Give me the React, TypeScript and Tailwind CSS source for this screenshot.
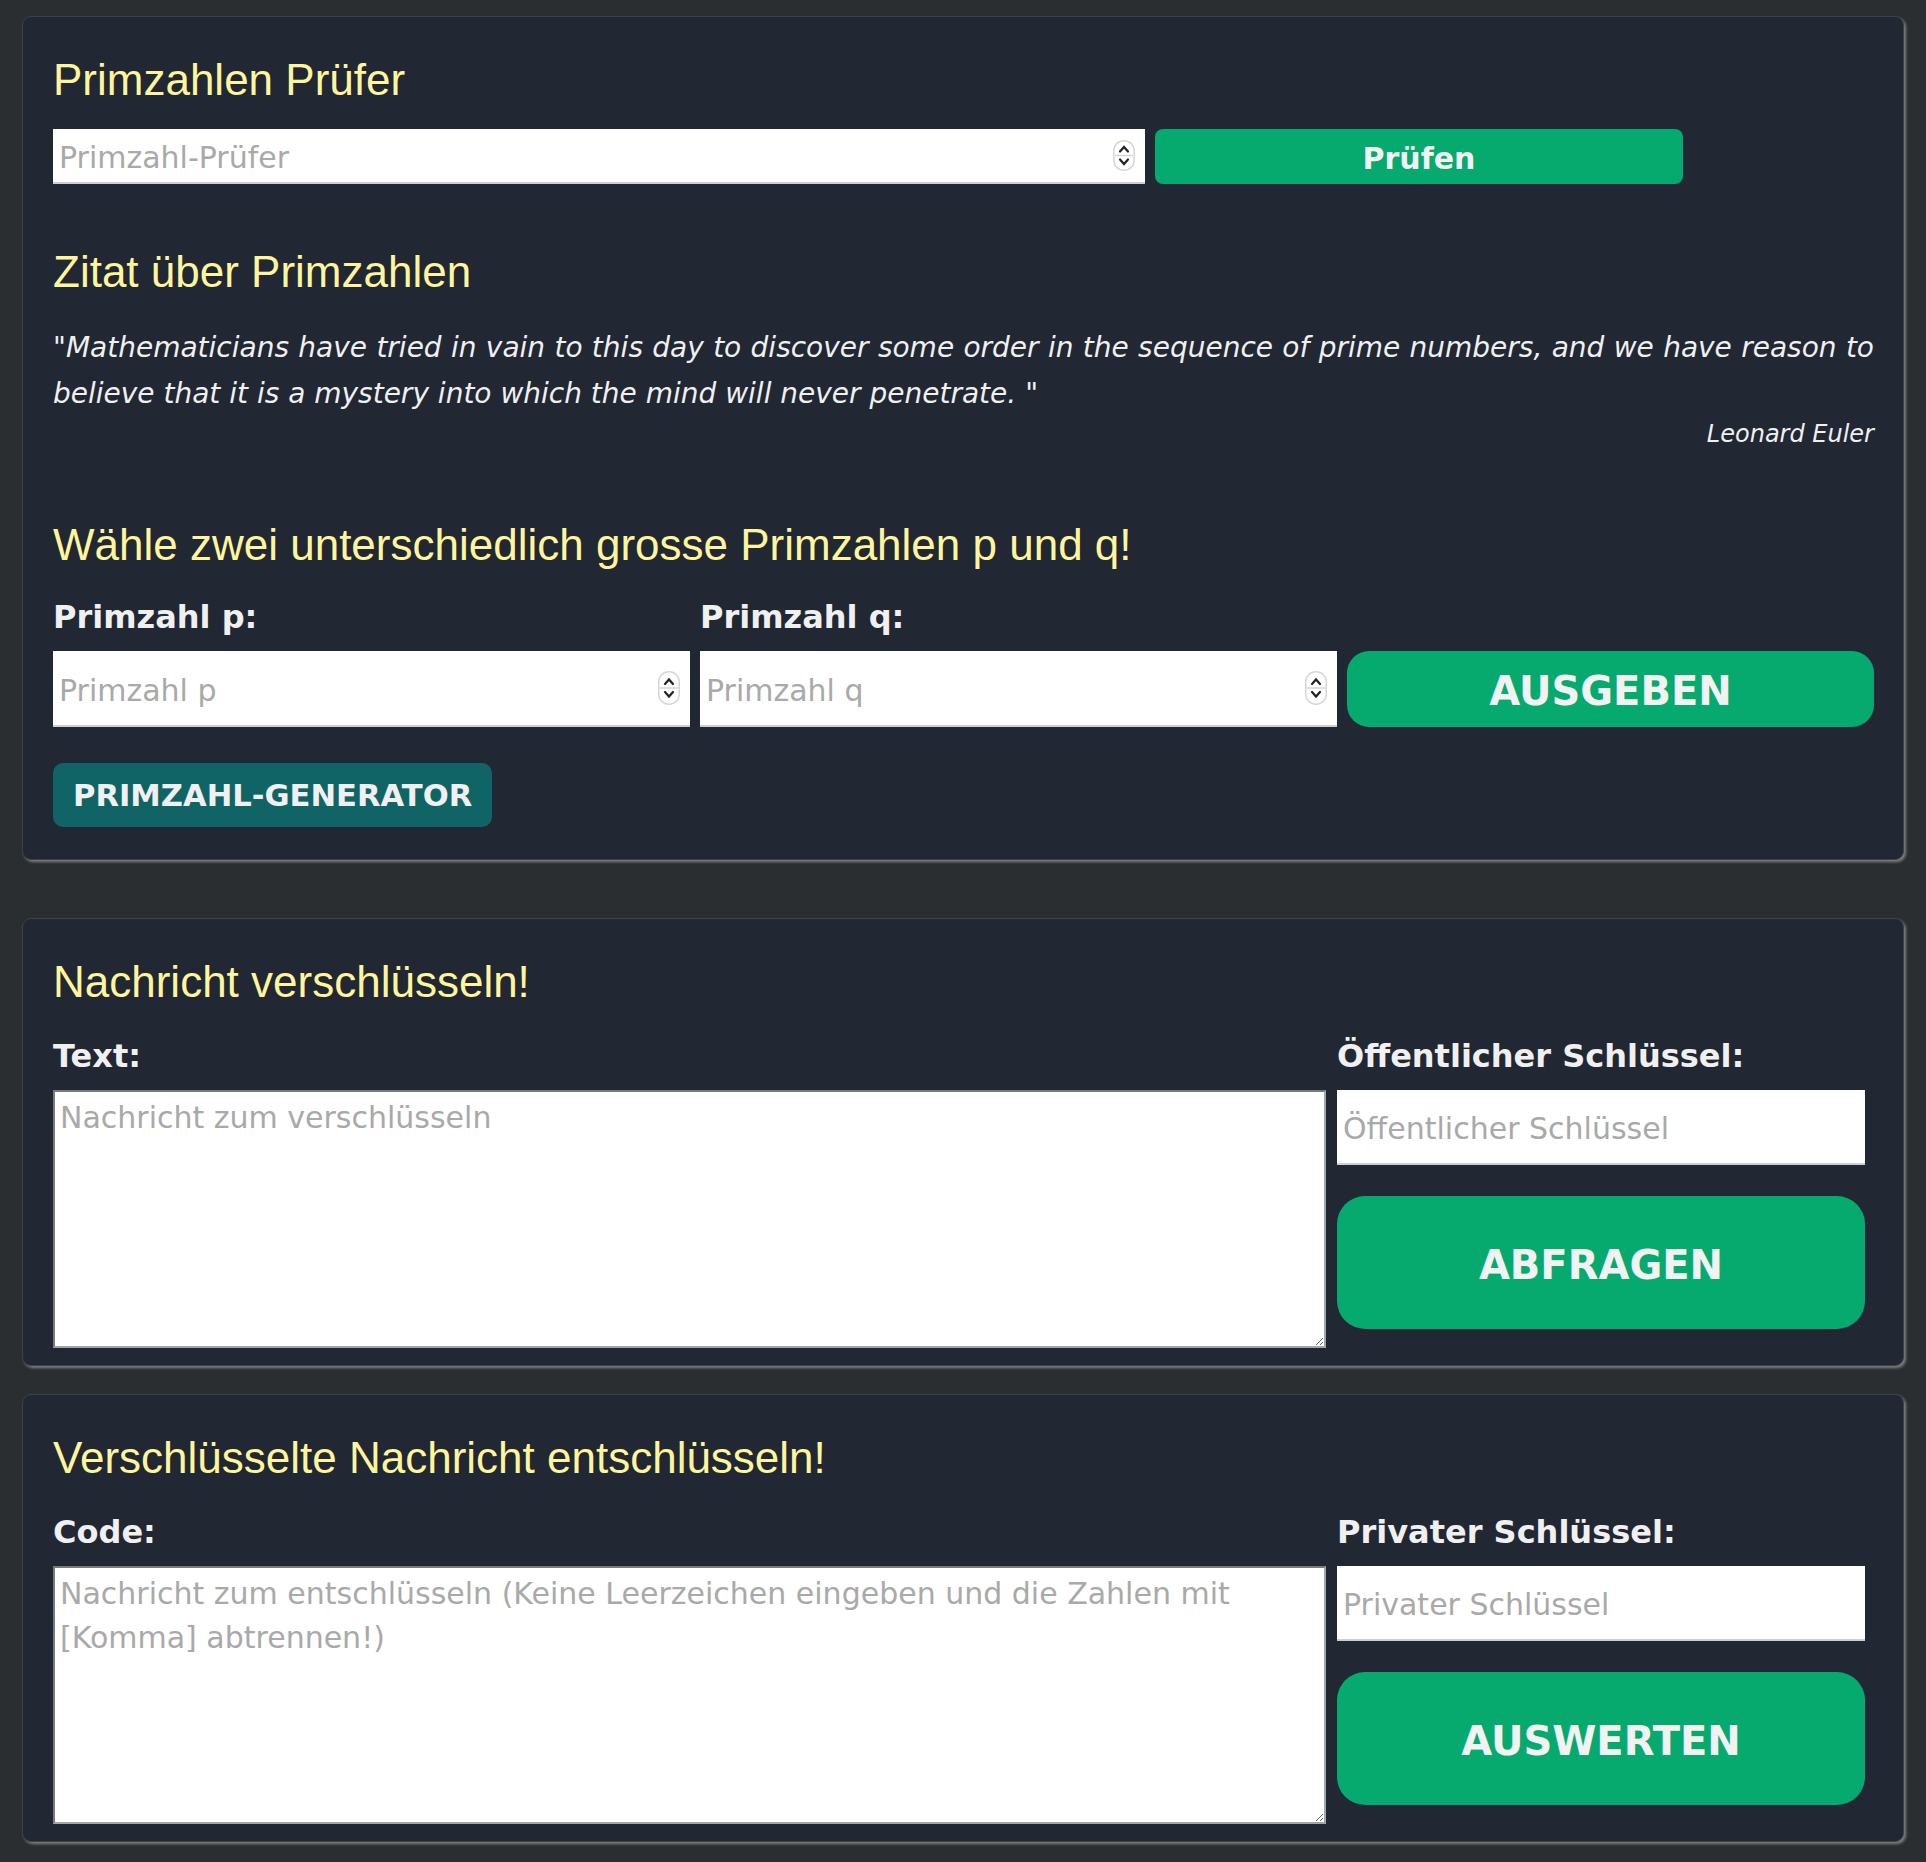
import { ReactNode } from "react";

const headingFont = "font-['Liberation_Sans',Arial,sans-serif]";
const bodyFont = "font-['DejaVu_Sans',Verdana,sans-serif]";

function Card({ children, className = "" }: { children: ReactNode; className?: string }) {
  return (
    <section
      className={`mx-[22px] rounded-[9px] border border-[#3d424a] bg-[#212733] pl-[30px] pr-[29px] pt-[38px] shadow-[2px_2px_3px_#7f7f7f] ${className}`}
    >
      {children}
    </section>
  );
}

function Heading({ children, className = "" }: { children: ReactNode; className?: string }) {
  return (
    <h2 className={`${headingFont} text-[44px] leading-[50px] font-normal text-[#fff59d] ${className}`}>
      {children}
    </h2>
  );
}

function Label({ children }: { children: ReactNode }) {
  return <label className="block text-[32px] leading-[36px] font-bold text-[#f0f0f0]">{children}</label>;
}

function Spinner({ small = false }: { small?: boolean }) {
  const h = small ? 31 : 34;
  return (
    <svg width="22" height={h} viewBox={`0 0 22 ${h}`} className="shrink-0">
      <rect x="0.75" y="0.75" width="20.5" height={h - 1.5} rx="10" fill="#fff" stroke="#d6d6d6" strokeWidth="1.5" />
      <line x1="2" y1={h / 2} x2="20" y2={h / 2} stroke="#d4d4d4" strokeWidth="1.5" />
      <path d={`M7 ${h / 2 - 4} L11 ${h / 2 - 8.5} L15 ${h / 2 - 4}`} fill="none" stroke="#222" strokeWidth="2.2" strokeLinecap="round" />
      <path d={`M7 ${h / 2 + 4} L11 ${h / 2 + 8.5} L15 ${h / 2 + 4}`} fill="none" stroke="#222" strokeWidth="2.2" strokeLinecap="round" />
    </svg>
  );
}

function NumberField({ placeholder, className = "", small = false }: { placeholder: string; className?: string; small?: boolean }) {
  return (
    <div className={`flex items-center bg-white border-b-2 border-[#cfcfcf] pr-[10px] ${className}`}>
      <input
        type="text"
        placeholder={placeholder}
        className="min-w-0 flex-1 bg-transparent pl-[6px] pt-[4px] text-[30px] text-[#222] outline-none placeholder:text-[#a9a9a9]"
      />
      <Spinner small={small} />
    </div>
  );
}

function TextField({ placeholder }: { placeholder: string }) {
  return (
    <input
      type="text"
      placeholder={placeholder}
      className="block h-[75px] w-full bg-white border-b-2 border-[#cfcfcf] pl-[6px] pt-[4px] text-[30px] text-[#222] outline-none placeholder:text-[#a9a9a9]"
    />
  );
}

function CipherCard({
  title,
  label,
  area,
  keyLabel,
  keyPlaceholder,
  action,
  className = "",
}: {
  title: string;
  label: string;
  area: string;
  keyLabel: string;
  keyPlaceholder: string;
  action: string;
  className?: string;
}) {
  return (
    <Card className={`pb-[17px] ${className}`}>
      <Heading>{title}</Heading>
      <div className="mt-[31px] grid grid-cols-[1273px_528px] gap-x-[11px] gap-y-[16px]">
        <Label>{label}</Label>
        <Label>{keyLabel}</Label>
        <textarea
          placeholder={area}
          className="block h-[258px] w-full border-2 border-[#7a7a7a] border-b-[#a5a5a5] border-r-[#a5a5a5] bg-white px-[5px] pt-[4px] text-[30px] leading-[44px] text-[#222] outline-none placeholder:text-[#a9a9a9]"
        />
        <div>
          <TextField placeholder={keyPlaceholder} />
          <button className="mt-[31px] h-[133px] w-full rounded-[28px] bg-[#06a96e] pt-[4px] text-[40px] font-bold text-[#f2f2f2]">
            {action}
          </button>
        </div>
      </div>
    </Card>
  );
}

export default function App() {
  return (
    <div className={`${bodyFont} min-h-screen bg-[#2a2e31] pt-[16px] pb-[21px]`}>
      <Card className="pb-[32px]">
        <Heading>Primzahlen Prüfer</Heading>
        <div className="mt-[24px] flex gap-[10px]">
          <NumberField placeholder="Primzahl-Prüfer" className="h-[55px] w-[1092px]" small />
          <button className="h-[55px] w-[528px] rounded-[8px] bg-[#06a96e] pt-[3px] text-[30px] font-bold text-[#f2f2f2]">
            Prüfen
          </button>
        </div>

        <Heading className="mt-[63px]">Zitat über Primzahlen</Heading>
        <p className="mt-[28px] text-justify text-[28px] leading-[46px] italic text-[#f0f0f0]">
          "Mathematicians have tried in vain to this day to discover some order in the sequence of prime numbers, and we
          have reason to believe that it is a mystery into which the mind will never penetrate. "
        </p>
        <p className="mt-[2px] text-right text-[24px] leading-[30px] italic text-[#f0f0f0]">Leonard Euler</p>

        <Heading className="mt-[71px]">Wähle zwei unterschiedlich grosse Primzahlen p und q!</Heading>
        <div className="mt-[29px] grid grid-cols-[637px_637px_1fr] gap-x-[10px] gap-y-[16px]">
          <Label>Primzahl p:</Label>
          <Label>Primzahl q:</Label>
          <div />
          <NumberField placeholder="Primzahl p" className="h-[76px]" />
          <NumberField placeholder="Primzahl q" className="h-[76px]" />
          <button className="h-[76px] rounded-[22px] bg-[#06a96e] pt-[4px] text-[40px] font-bold text-[#f2f2f2]">AUSGEBEN</button>
        </div>
        <button className="mt-[36px] h-[64px] rounded-[10px] bg-[#116466] px-[20px] pt-[2px] text-[30.6px] font-bold text-[#f0f0f0]">
          PRIMZAHL-GENERATOR
        </button>
      </Card>

      <CipherCard
        className="mt-[58px]"
        title="Nachricht verschlüsseln!"
        label="Text:"
        area="Nachricht zum verschlüsseln"
        keyLabel="Öffentlicher Schlüssel:"
        keyPlaceholder="Öffentlicher Schlüssel"
        action="ABFRAGEN"
      />

      <CipherCard
        className="mt-[28px]"
        title="Verschlüsselte Nachricht entschlüsseln!"
        label="Code:"
        area="Nachricht zum entschlüsseln (Keine Leerzeichen eingeben und die Zahlen mit [Komma] abtrennen!)"
        keyLabel="Privater Schlüssel:"
        keyPlaceholder="Privater Schlüssel"
        action="AUSWERTEN"
      />
    </div>
  );
}
